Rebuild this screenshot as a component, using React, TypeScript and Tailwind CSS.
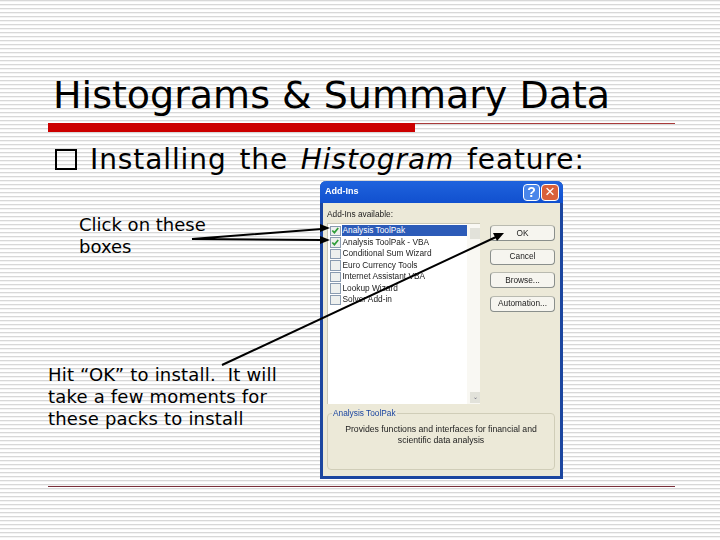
import React from "react";

const addIns = [
  { label: "Analysis ToolPak", on: true, selected: true },
  { label: "Analysis ToolPak - VBA", on: true },
  { label: "Conditional Sum Wizard" },
  { label: "Euro Currency Tools" },
  { label: "Internet Assistant VBA" },
  { label: "Lookup Wizard" },
  { label: "Solver Add-in" },
];

const buttons = ["OK", "Cancel", "Browse...", "Automation..."];

const AddInsDialog: React.FC = () => (
  <div className="w-[243px] h-[298px] shrink-0 flex flex-col bg-[#ece9d8] border-[3px] border-t-0 border-[#1c46a0] rounded-t-md font-['Liberation_Sans',sans-serif] text-[8.3px] text-[#222] blur-[0.3px]">
    <div className="h-[22px] -mx-[3px] pl-[5px] pr-[4px] flex items-center justify-between rounded-t-md bg-gradient-to-b from-[#1f63dd] to-[#1150cf] text-white text-[9px] font-bold">
      <span>Add-Ins</span>
      <div className="flex gap-[1px]">
        <span className="w-[17px] h-[17px] flex items-center justify-center rounded-sm bg-[#4a86ea] border border-white text-[14px]">?</span>
        <span className="w-[18px] h-[17px] flex items-center justify-center rounded-sm bg-[#d9603a] border border-white text-[17px] font-normal">×</span>
      </div>
    </div>
    <div className="flex-1 flex flex-col pl-[4px] pr-[5px] pt-[3px] pb-[6px]">
      <div className="h-[17px] leading-[17px]">Add-Ins available:</div>
      <div className="flex gap-[10px]">
        <div className="w-[153px] h-[181px] flex bg-white border-t border-l border-[#c9c7b8]">
          <div className="flex-1 flex flex-col pt-[1px] pl-[2px]">
            {addIns.map((a) => (
              <div key={a.label} className="h-[11.5px] flex items-center">
                <span className="w-[10.5px] h-[10.5px] shrink-0 flex items-center justify-center border border-[#8a9bb0] bg-[#eef0ee]">
                  {a.on && (
                    <svg viewBox="0 0 10 10" className="w-[9px] h-[9px]">
                      <path d="M1.5 5l2.5 2.5 4.5-5.5" fill="none" stroke="#2f9e3a" strokeWidth="2" />
                    </svg>
                  )}
                </span>
                <span className={a.selected ? "flex-1 h-[11px] leading-[11px] pl-[1px] ml-[1px] bg-[#2c5bb8] text-white" : "leading-[11px] pl-[2px]"}>{a.label}</span>
              </div>
            ))}
          </div>
          <div className="w-[13px] flex flex-col justify-between items-end bg-[#f9f8f3]">
            <span className="w-[10px] h-[11px] mt-[4px] bg-[#e2e2da]" />
            <span className="w-[10px] h-[11px] mb-[1px] flex items-center justify-center bg-[#e2e2da] text-[6px] text-[#667]">⌄</span>
          </div>
        </div>
        <div className="flex-1 flex flex-col gap-[7.5px] pt-[2px]">
          {buttons.map((b) => (
            <div key={b} className="h-[16px] flex items-center justify-center rounded-sm border border-[#8a8f8c] border-t-[#b9bab0] bg-[#f6f5ef]">{b}</div>
          ))}
        </div>
      </div>
      <div className="relative mt-[9px] h-[57px] border border-[#d0cdb8] rounded-sm text-center pt-[10px] leading-[11px] text-[8.7px]">
        <span className="absolute -top-[6px] left-[4px] px-[1px] bg-[#ece9d8] text-[#1c46a0] text-[8.3px]">Analysis ToolPak</span>
        Provides functions and interfaces for financial and
        <br />
        scientific data analysis
      </div>
    </div>
  </div>
);

export default function App() {
  return (
    <div className="relative w-[720px] h-[540px] overflow-hidden font-['DejaVu_Sans',sans-serif] text-black bg-[repeating-linear-gradient(to_bottom,#d8d8d8_0px,#d8d8d8_1px,#f3f3f3_1px,#f3f3f3_2px,#ffffff_2px,#ffffff_4px)]">
      <div className="pl-[53px] pt-[70px] h-[123px] text-[38px] leading-[50px]">Histograms &amp; Summary Data</div>
      <div className="ml-[48px] w-[627px] h-[9px] flex items-start">
        <div className="w-[367px] h-[9px] bg-[#cc0000]" />
        <div className="flex-1 h-px bg-[#a83a3a]" />
      </div>
      <div className="pl-[55px] pt-[10px] h-[45px] flex items-center text-[28px] leading-[35px] tracking-[0.9px] [word-spacing:3px]">
        <span className="w-[22px] h-[21px] mr-[13px] border-2 border-black" />
        <span>Installing the <i>Histogram</i> feature:</span>
      </div>
      <div className="mt-[4px] pl-[48px] flex">
        <div className="w-[272px] pt-[33px] text-[18px] leading-[22px]">
          <div className="pl-[31px] h-[44px] whitespace-nowrap">Click on these<br />boxes</div>
          <div className="mt-[106px] whitespace-nowrap tracking-[0.2px]">Hit “OK” to install.&nbsp; It will<br />take a few moments for<br />these packs to install</div>
        </div>
        <AddInsDialog />
      </div>
      <div className="mt-[7px] ml-[48px] w-[627px] h-px bg-[#7a2f3a]" />
      <svg className="absolute inset-0" width="720" height="540" viewBox="0 0 720 540">
        <path d="M192 239L322 229M192 239L322 240M222 365L496 237" stroke="#000" strokeWidth="2" fill="none" />
        <path d="M330 228l-10-4v8zM330 240l-10-4v8zM504 233l-11 0 4 8z" fill="#000" />
      </svg>
    </div>
  );
}
